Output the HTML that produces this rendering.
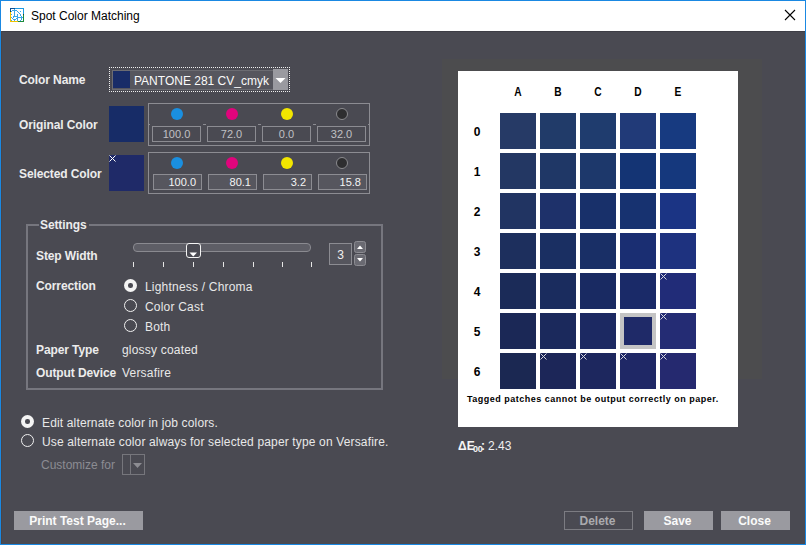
<!DOCTYPE html>
<html><head><meta charset="utf-8">
<style>
*{margin:0;padding:0;box-sizing:border-box}
html,body{width:806px;height:545px;overflow:hidden}
body{position:relative;background:#4a4a52;font-family:"Liberation Sans",sans-serif;font-size:12px;color:#e8e8e8}
.a{position:absolute}
.t{position:absolute;white-space:nowrap;line-height:14px;letter-spacing:0.2px}
.b{font-weight:bold}
.lbl{font-weight:bold;color:#ececec;letter-spacing:-0.1px}
.frame{position:absolute;border:1px solid #1883d7}
.sw{position:absolute}
.box{position:absolute;border:1px solid #8c8c92}
.dot{position:absolute;width:12px;height:12px;border-radius:50%}
.vb{position:absolute;border:1px solid #8c8c92;height:16px;width:49px;font-size:11px;line-height:14px;text-align:center;color:#c0c0c4}
.vs{background:#56565e;color:#f4f4f4;text-align:right;padding-right:5px}
.radio{position:absolute;width:13px;height:13px;border-radius:50%;border:1.4px solid #f0f0f0}
.radio.on{background:#f4f4f4;border:none}
.radio.on::after{content:"";position:absolute;left:4.25px;top:4.25px;width:4.5px;height:4.5px;border-radius:50%;background:#4a4a52}
.btn{position:absolute;top:511px;height:19px;background:#9a9aa0;color:#fafafa;font-weight:bold;text-align:center;line-height:21px;font-size:12px;padding-right:2px}
.patch{position:absolute;width:36px;height:36px}
.colh{position:absolute;top:85px;transform:scaleX(0.85);width:36px;text-align:center;font-weight:bold;color:#000;font-size:12px;line-height:14px}
.rowh{position:absolute;left:468px;width:18px;text-align:center;font-weight:bold;color:#000;font-size:12px;line-height:14px}
.x{position:absolute;width:7px;height:7px}
</style></head><body>
<!-- window frame -->
<div class="a" style="left:0;top:0;width:806px;height:31px;background:#fff"></div>
<div class="a" style="left:1px;top:31px;width:804px;height:1px;background:#3e3e46"></div>
<div class="a" style="left:1px;top:31px;width:1px;height:513px;background:#4a4446"></div>
<div class="a" style="left:0;top:0;width:806px;height:545px;border:1px solid #1a88e2"></div>
<!-- title icon -->
<svg class="a" style="left:10px;top:8px" width="14" height="14" viewBox="0 0 14 14" shape-rendering="crispEdges"><rect width="14" height="14" fill="#fff"/><rect x="0" y="0" width="1" height="1" fill="#0b4f96"/><rect x="13" y="0" width="1" height="1" fill="#1d9ae2"/><rect x="0" y="13" width="1" height="1" fill="#f2c200"/><rect x="1" y="0" width="1" height="1" fill="#0b4f96"/><rect x="13" y="1" width="1" height="1" fill="#1d9ae2"/><rect x="1" y="13" width="1" height="1" fill="#f2c200"/><rect x="0" y="1" width="1" height="1" fill="#0b4f96"/><rect x="2" y="0" width="1" height="1" fill="#0b4f96"/><rect x="13" y="2" width="1" height="1" fill="#1d9ae2"/><rect x="2" y="13" width="1" height="1" fill="#f2c200"/><rect x="0" y="2" width="1" height="1" fill="#0b4f96"/><rect x="3" y="0" width="1" height="1" fill="#0b4f96"/><rect x="13" y="3" width="1" height="1" fill="#1d9ae2"/><rect x="3" y="13" width="1" height="1" fill="#f2c200"/><rect x="0" y="3" width="1" height="1" fill="#1e4a30"/><rect x="4" y="0" width="1" height="1" fill="#0b4f96"/><rect x="13" y="4" width="1" height="1" fill="#1d9ae2"/><rect x="4" y="13" width="1" height="1" fill="#f2c200"/><rect x="0" y="4" width="1" height="1" fill="#f2c200"/><rect x="5" y="0" width="1" height="1" fill="#1d9ae2"/><rect x="13" y="5" width="1" height="1" fill="#1d9ae2"/><rect x="5" y="13" width="1" height="1" fill="#f2c200"/><rect x="0" y="5" width="1" height="1" fill="#f2c200"/><rect x="6" y="0" width="1" height="1" fill="#1d9ae2"/><rect x="13" y="6" width="1" height="1" fill="#1e4a30"/><rect x="6" y="13" width="1" height="1" fill="#f2c200"/><rect x="0" y="6" width="1" height="1" fill="#f2c200"/><rect x="7" y="0" width="1" height="1" fill="#1d9ae2"/><rect x="13" y="7" width="1" height="1" fill="#1a8a3a"/><rect x="7" y="13" width="1" height="1" fill="#f2c200"/><rect x="0" y="7" width="1" height="1" fill="#f2c200"/><rect x="8" y="0" width="1" height="1" fill="#1d9ae2"/><rect x="13" y="8" width="1" height="1" fill="#1a8a3a"/><rect x="8" y="13" width="1" height="1" fill="#1a8a3a"/><rect x="0" y="8" width="1" height="1" fill="#f2c200"/><rect x="9" y="0" width="1" height="1" fill="#1d9ae2"/><rect x="13" y="9" width="1" height="1" fill="#1a8a3a"/><rect x="9" y="13" width="1" height="1" fill="#1a8a3a"/><rect x="0" y="9" width="1" height="1" fill="#f2c200"/><rect x="10" y="0" width="1" height="1" fill="#1d9ae2"/><rect x="13" y="10" width="1" height="1" fill="#1a8a3a"/><rect x="10" y="13" width="1" height="1" fill="#1a8a3a"/><rect x="0" y="10" width="1" height="1" fill="#f2c200"/><rect x="11" y="0" width="1" height="1" fill="#1d9ae2"/><rect x="13" y="11" width="1" height="1" fill="#1a8a3a"/><rect x="11" y="13" width="1" height="1" fill="#1a8a3a"/><rect x="0" y="11" width="1" height="1" fill="#f2c200"/><rect x="12" y="0" width="1" height="1" fill="#1d9ae2"/><rect x="13" y="12" width="1" height="1" fill="#1a8a3a"/><rect x="12" y="13" width="1" height="1" fill="#1a8a3a"/><rect x="0" y="12" width="1" height="1" fill="#f2c200"/><rect x="13" y="13" width="1" height="1" fill="#1a8a3a"/><rect x="4" y="1" width="1" height="1" fill="#3aa8e8"/><rect x="2" y="2" width="1" height="1" fill="#3aa8e8"/><rect x="3" y="2" width="1" height="1" fill="#3aa8e8"/><rect x="4" y="2" width="1" height="1" fill="#3aa8e8"/><rect x="5" y="2" width="1" height="1" fill="#3aa8e8"/><rect x="6" y="2" width="1" height="1" fill="#3aa8e8"/><rect x="1" y="3" width="1" height="1" fill="#3aa8e8"/><rect x="4" y="3" width="1" height="1" fill="#3aa8e8"/><rect x="7" y="3" width="1" height="1" fill="#3aa8e8"/><rect x="10" y="3" width="1" height="1" fill="#3aa8e8"/><rect x="4" y="4" width="1" height="1" fill="#3aa8e8"/><rect x="8" y="4" width="1" height="1" fill="#3aa8e8"/><rect x="4" y="5" width="1" height="1" fill="#3aa8e8"/><rect x="9" y="5" width="1" height="1" fill="#3aa8e8"/><rect x="1" y="6" width="1" height="1" fill="#3aa8e8"/><rect x="4" y="6" width="1" height="1" fill="#3aa8e8"/><rect x="7" y="6" width="1" height="1" fill="#3aa8e8"/><rect x="10" y="6" width="1" height="1" fill="#3aa8e8"/><rect x="4" y="7" width="1" height="1" fill="#3aa8e8"/><rect x="7" y="7" width="1" height="1" fill="#3aa8e8"/><rect x="10" y="7" width="1" height="1" fill="#3aa8e8"/><rect x="3" y="8" width="1" height="1" fill="#3aa8e8"/><rect x="4" y="8" width="1" height="1" fill="#3aa8e8"/><rect x="5" y="8" width="1" height="1" fill="#3aa8e8"/><rect x="6" y="8" width="1" height="1" fill="#3aa8e8"/><rect x="7" y="8" width="1" height="1" fill="#3aa8e8"/><rect x="11" y="8" width="1" height="1" fill="#3aa8e8"/><rect x="1" y="9" width="1" height="1" fill="#3aa8e8"/><rect x="3" y="9" width="1" height="1" fill="#3aa8e8"/><rect x="7" y="9" width="1" height="1" fill="#3aa8e8"/><rect x="8" y="9" width="1" height="1" fill="#3aa8e8"/><rect x="9" y="9" width="1" height="1" fill="#3aa8e8"/><rect x="10" y="9" width="1" height="1" fill="#3aa8e8"/><rect x="11" y="9" width="1" height="1" fill="#3aa8e8"/><rect x="12" y="9" width="1" height="1" fill="#3aa8e8"/><rect x="2" y="10" width="1" height="1" fill="#3aa8e8"/><rect x="6" y="10" width="1" height="1" fill="#3aa8e8"/><rect x="7" y="10" width="1" height="1" fill="#3aa8e8"/><rect x="11" y="10" width="1" height="1" fill="#3aa8e8"/><rect x="3" y="11" width="1" height="1" fill="#3aa8e8"/><rect x="4" y="11" width="1" height="1" fill="#3aa8e8"/><rect x="5" y="11" width="1" height="1" fill="#3aa8e8"/><rect x="7" y="11" width="1" height="1" fill="#3aa8e8"/><rect x="11" y="11" width="1" height="1" fill="#3aa8e8"/><rect x="1" y="12" width="1" height="1" fill="#3aa8e8"/><rect x="4" y="12" width="1" height="1" fill="#3aa8e8"/><rect x="7" y="12" width="1" height="1" fill="#3aa8e8"/><rect x="10" y="12" width="1" height="1" fill="#3aa8e8"/></svg>
<div class="t" style="left:31px;top:9px;color:#000;font-size:12px;letter-spacing:0">Spot Color Matching</div>
<svg class="a" style="left:784px;top:9px" width="12" height="12" viewBox="0 0 12 12"><path d="M1 1L11 11M11 1L1 11" stroke="#000" stroke-width="1.1"/></svg>

<!-- left labels -->
<div class="t lbl" style="left:19px;top:73px">Color Name</div>
<div class="t lbl" style="left:19px;top:118px">Original Color</div>
<div class="t lbl" style="left:19px;top:167px">Selected Color</div>

<!-- combo -->
<div class="a" style="left:109px;top:67px;width:181px;height:25px;border:1px dotted #f0f0f0"></div>
<div class="a" style="left:112px;top:70px;width:176px;height:20px;border:1px solid #6c6c72;background:#56565e"></div>
<div class="sw" style="left:113px;top:71px;width:17px;height:17px;background:#182c68"></div>
<div class="t" style="left:134px;top:74px;color:#fafafa;font-size:12px;letter-spacing:0">PANTONE 281 CV_cmyk</div>
<div class="a" style="left:273px;top:69px;width:15px;height:21px;background:#9a9aa0"></div>
<svg class="a" style="left:275px;top:77px" width="11" height="7" viewBox="0 0 11 7"><path d="M0.5 1H10.5L5.5 6Z" fill="#fff"/></svg>

<!-- original color -->
<div class="sw" style="left:109px;top:106px;width:35px;height:36px;background:#172c67"></div>
<div class="box" style="left:148px;top:103px;width:222px;height:43px"></div>
<div class="dot" style="left:171px;top:108px;background:#1a8fe0"></div>
<div class="dot" style="left:226px;top:108px;background:#e0047c"></div>
<div class="dot" style="left:281px;top:108px;background:#f2e600"></div>
<div class="dot" style="left:336px;top:108px;background:#2e2e30;border:1px solid #8a8a8e"></div>
<div class="vb" style="left:152px;top:126px">100.0</div>
<div class="vb" style="left:207px;top:126px">72.0</div>
<div class="vb" style="left:262px;top:126px">0.0</div>
<div class="vb" style="left:317px;top:126px">32.0</div>

<div class="a" style="left:148px;top:124px;width:2px;height:1px;background:#8c8c92"></div>
<div class="a" style="left:203px;top:124px;width:3px;height:1px;background:#8c8c92"></div>
<div class="a" style="left:258px;top:124px;width:3px;height:1px;background:#8c8c92"></div>
<div class="a" style="left:313px;top:124px;width:3px;height:1px;background:#8c8c92"></div>
<div class="a" style="left:368px;top:124px;width:2px;height:1px;background:#8c8c92"></div>
<!-- selected color -->
<div class="sw" style="left:109px;top:155px;width:35px;height:36px;background:#1f2a68"></div>
<svg class="a" style="left:109px;top:155px" width="7" height="7"><path d="M0.5 0.5L6.5 6.5M6.5 0.5L0.5 6.5" stroke="#fff" stroke-width="1"/></svg>
<div class="box" style="left:148px;top:152px;width:222px;height:42px"></div>
<div class="dot" style="left:171px;top:157px;background:#1a8fe0"></div>
<div class="dot" style="left:226px;top:157px;background:#e0047c"></div>
<div class="dot" style="left:281px;top:157px;background:#f2e600"></div>
<div class="dot" style="left:336px;top:157px;background:#2e2e30;border:1px solid #8a8a8e"></div>
<div class="vb vs" style="left:153px;top:174px">100.0</div>
<div class="vb vs" style="left:208px;top:174px">80.1</div>
<div class="vb vs" style="left:263px;top:174px">3.2</div>
<div class="vb vs" style="left:318px;top:174px">15.8</div>

<!-- settings group -->
<div class="a" style="left:26px;top:224px;width:357px;height:166px;border:2px solid #76767e"></div>
<div class="a" style="left:39px;top:222px;width:50px;height:5px;background:#4a4a52"></div>
<div class="t lbl" style="left:40px;top:218px">Settings</div>
<div class="t lbl" style="left:36px;top:249px">Step Width</div>
<div class="a" style="left:133px;top:243px;width:178px;height:9px;border:1px solid #8a8a90;border-radius:4px;background:#5e5e66"></div>
<div class="a" style="left:186px;top:243px;width:15px;height:15px;border:1.5px solid #f4f4f4;border-radius:3px;background:#4a4a52"></div>
<svg class="a" style="left:189px;top:252px" width="9" height="5" viewBox="0 0 9 5"><path d="M0.5 0.5H8L4.25 4.5Z" fill="#fff"/></svg>
<div class="a" style="left:133px;top:262px;width:1px;height:5px;background:#e6e6e6"></div>
<div class="a" style="left:163px;top:262px;width:1px;height:5px;background:#e6e6e6"></div>
<div class="a" style="left:193px;top:262px;width:1px;height:5px;background:#e6e6e6"></div>
<div class="a" style="left:223px;top:262px;width:1px;height:5px;background:#e6e6e6"></div>
<div class="a" style="left:253px;top:262px;width:1px;height:5px;background:#e6e6e6"></div>
<div class="a" style="left:282px;top:262px;width:1px;height:5px;background:#e6e6e6"></div>
<div class="a" style="left:311px;top:262px;width:1px;height:5px;background:#e6e6e6"></div>
<div class="a" style="left:329px;top:243px;width:23px;height:22px;border:1px solid #8c8c92;background:#55555d;text-align:center;line-height:22px;font-size:12px;color:#f0f0f0">3</div>
<div class="a" style="left:354px;top:241px;width:12px;height:12px;border:1px solid #8c8c92;border-radius:2.5px;background:#6a6a72"></div>
<svg class="a" style="left:356px;top:244px" width="8" height="6" viewBox="0 0 8 6"><path d="M1 5H7L4 1.5Z" fill="#fff"/></svg>
<div class="a" style="left:354px;top:254px;width:12px;height:12px;border:1px solid #8c8c92;border-radius:2.5px;background:#6a6a72"></div>
<svg class="a" style="left:356px;top:257px" width="8" height="6" viewBox="0 0 8 6"><path d="M1 1H7L4 4.5Z" fill="#fff"/></svg>

<div class="t lbl" style="left:36px;top:279px">Correction</div>
<div class="radio on" style="left:124px;top:279px"></div>
<div class="t" style="left:145px;top:280px">Lightness / Chroma</div>
<div class="radio" style="left:124px;top:299px"></div>
<div class="t" style="left:145px;top:300px">Color Cast</div>
<div class="radio" style="left:124px;top:319px"></div>
<div class="t" style="left:145px;top:320px">Both</div>
<div class="t lbl" style="left:36px;top:343px">Paper Type</div>
<div class="t" style="left:122px;top:343px">glossy coated</div>
<div class="t lbl" style="left:36px;top:366px">Output Device</div>
<div class="t" style="left:122px;top:366px">Versafire</div>

<!-- bottom radios -->
<div class="radio on" style="left:21px;top:415px"></div>
<div class="t" style="left:42px;top:416px;letter-spacing:0.15px">Edit alternate color in job colors.</div>
<div class="radio" style="left:21px;top:434px"></div>
<div class="t" style="left:42px;top:435px;letter-spacing:0.15px">Use alternate color always for selected paper type on Versafire.</div>
<div class="t" style="left:41px;top:458px;color:#8c8c92;letter-spacing:0">Customize for</div>
<div class="a" style="left:122px;top:454px;width:23px;height:21px;border:1px solid #76767c"></div>
<div class="a" style="left:130px;top:455px;width:1px;height:19px;background:#76767c"></div>
<svg class="a" style="left:133px;top:462px" width="10" height="7" viewBox="0 0 10 7"><path d="M0 1H9L4.5 6Z" fill="#8c8c92"/></svg>

<!-- right panel -->
<div class="a" style="left:442px;top:59px;width:320px;height:320px;background:#4c4c4e"></div>
<div class="a" style="left:458px;top:71px;width:280px;height:356px;background:#fff"></div>
<div class="colh" style="left:500px">A</div>
<div class="colh" style="left:540px">B</div>
<div class="colh" style="left:580px">C</div>
<div class="colh" style="left:620px">D</div>
<div class="colh" style="left:660px">E</div>
<div class="rowh" style="top:125px">0</div>
<div class="rowh" style="top:165px">1</div>
<div class="rowh" style="top:205px">2</div>
<div class="rowh" style="top:245px">3</div>
<div class="rowh" style="top:285px">4</div>
<div class="rowh" style="top:325px">5</div>
<div class="rowh" style="top:365px">6</div>
<div id="grid"></div>
<!-- row 0 -->
<div class="patch" style="left:500px;top:113px;background:#263a66"></div>
<div class="patch" style="left:540px;top:113px;background:#213b69"></div>
<div class="patch" style="left:580px;top:113px;background:#1f3c6e"></div>
<div class="patch" style="left:620px;top:113px;background:#213a78"></div>
<div class="patch" style="left:660px;top:113px;background:#173a80"></div>
<!-- row 1 -->
<div class="patch" style="left:500px;top:153px;background:#233763"></div>
<div class="patch" style="left:540px;top:153px;background:#1f3766"></div>
<div class="patch" style="left:580px;top:153px;background:#1d386b"></div>
<div class="patch" style="left:620px;top:153px;background:#143474"></div>
<div class="patch" style="left:660px;top:153px;background:#15387d"></div>
<!-- row 2 -->
<div class="patch" style="left:500px;top:193px;background:#213462"></div>
<div class="patch" style="left:540px;top:193px;background:#1e316a"></div>
<div class="patch" style="left:580px;top:193px;background:#18306a"></div>
<div class="patch" style="left:620px;top:193px;background:#173270"></div>
<div class="patch" style="left:660px;top:193px;background:#1b3484"></div>
<!-- row 3 -->
<div class="patch" style="left:500px;top:233px;background:#1d2f5d"></div>
<div class="patch" style="left:540px;top:233px;background:#1a2f62"></div>
<div class="patch" style="left:580px;top:233px;background:#192f66"></div>
<div class="patch" style="left:620px;top:233px;background:#1a2e72"></div>
<div class="patch" style="left:660px;top:233px;background:#1e327f"></div>
<!-- row 4 -->
<div class="patch" style="left:500px;top:273px;background:#1b2b58"></div>
<div class="patch" style="left:540px;top:273px;background:#1a2c5e"></div>
<div class="patch" style="left:580px;top:273px;background:#192a62"></div>
<div class="patch" style="left:620px;top:273px;background:#1a2a68"></div>
<div class="patch" style="left:660px;top:273px;background:#212c78"></div>
<!-- row 5 -->
<div class="patch" style="left:500px;top:313px;background:#1b2856"></div>
<div class="patch" style="left:540px;top:313px;background:#1b295c"></div>
<div class="patch" style="left:580px;top:313px;background:#1c2962"></div>
<div class="patch" style="left:620px;top:313px;background:#1f2a68;border:4px solid #c4c4c4"></div>
<div class="patch" style="left:660px;top:313px;background:#242c74"></div>
<!-- row 6 -->
<div class="patch" style="left:500px;top:353px;background:#1b2852"></div>
<div class="patch" style="left:540px;top:353px;background:#1c2658"></div>
<div class="patch" style="left:580px;top:353px;background:#1d275e"></div>
<div class="patch" style="left:620px;top:353px;background:#1f2866"></div>
<div class="patch" style="left:660px;top:353px;background:#25296f"></div>
<!-- x marks -->
<svg class="a" style="left:0;top:0" width="806" height="545">
 <g stroke="#d8d8e0" stroke-width="1" fill="none">
  <path d="M660.5 273.5L666.5 279.5M666.5 273.5L660.5 279.5"/>
  <path d="M660.5 313.5L666.5 319.5M666.5 313.5L660.5 319.5"/>
  <path d="M540.5 353.5L546.5 359.5M546.5 353.5L540.5 359.5"/>
  <path d="M580.5 353.5L586.5 359.5M586.5 353.5L580.5 359.5"/>
  <path d="M620.5 353.5L626.5 359.5M626.5 353.5L620.5 359.5"/>
  <path d="M660.5 353.5L666.5 359.5M666.5 353.5L660.5 359.5"/>
 </g>
</svg>
<div class="t b" style="left:467px;top:392px;color:#000;font-size:9px;letter-spacing:0.5px">Tagged patches cannot be output correctly on paper.</div>

<div class="t b" style="left:458px;top:439px;color:#f4f4f4;letter-spacing:0">&Delta;E</div>
<div class="t b" style="left:473px;top:442px;color:#f4f4f4;font-size:9px;letter-spacing:-0.3px">00</div>
<div class="t b" style="left:481px;top:439px;color:#f4f4f4;letter-spacing:0">:</div>
<div class="t" style="left:488px;top:439px;color:#f0f0f0;letter-spacing:0">2.43</div>

<!-- buttons -->
<div class="btn" style="left:14px;width:129px">Print Test Page...</div>
<div class="btn" style="left:564px;width:69px;background:transparent;border:1px solid #7c7c82;color:#aaaaae;line-height:19px">Delete</div>
<div class="btn" style="left:644px;width:69px">Save</div>
<div class="btn" style="left:721px;width:69px">Close</div>
</body></html>
